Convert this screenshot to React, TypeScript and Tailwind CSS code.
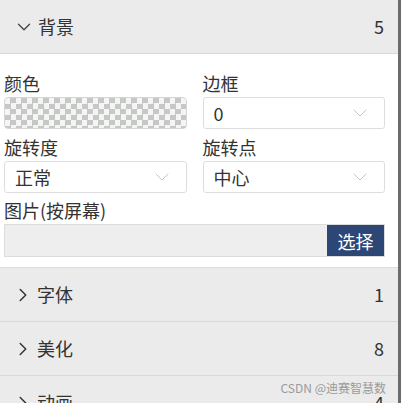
import { ChevronDown, ChevronRight } from 'lucide-react';

const closedSections = [
  { title: '字体', count: 1 },
  { title: '美化', count: 8 },
  { title: '动画', count: 4 },
];

const SelectBox = ({ value }: { value: string }) => (
  <div className="h-8 rounded-[3px] border border-[#dedede] bg-white flex items-center justify-between pl-[10px] pr-[12px]">
    <span className="text-[18px] text-[#333]">{value}</span>
    <ChevronDown className="w-[24px] h-[24px] text-[#c4c4c4]" strokeWidth={1} />
  </div>
);

const Label = ({ children }: { children: string }) => (
  <div className="h-7 flex items-center text-[18px] text-[#333] leading-none">{children}</div>
);

export default function App() {
  return (
    <div className="relative w-[401px] h-[403px] overflow-hidden bg-white font-['Noto_Sans_CJK_SC',sans-serif] flex">
      <div className="flex-1 flex flex-col">
        {/* open section */}
        <div className="h-[54px] shrink-0 bg-[#ebebeb] border-b border-[#d9d9d9] flex items-center pl-[13px] pr-[14px]">
          <ChevronDown className="w-[22px] h-[22px] text-[#444]" strokeWidth={1.4} />
          <span className="ml-[3px] text-[18px] text-[#333]">背景</span>
          <span className="ml-auto text-[18px] text-[#333]">5</span>
        </div>

        <div className="pt-[15px] pb-[10px] pl-1 pr-[13px] border-b border-[#dcdcdc]">
          <div className="grid grid-cols-2 gap-x-4">
            <div>
              <Label>颜色</Label>
              <div className="h-8 rounded-[4px] border border-[#d6d6d6] bg-[conic-gradient(#c6c8c6_25%,#f5f5f5_0_50%,#c6c8c6_0_75%,#f5f5f5_0)] bg-[length:11px_11px]" />
            </div>
            <div>
              <Label>边框</Label>
              <SelectBox value="0" />
            </div>
            <div className="mt-1">
              <Label>旋转度</Label>
              <SelectBox value="正常" />
            </div>
            <div className="mt-1">
              <Label>旋转点</Label>
              <SelectBox value="中心" />
            </div>
          </div>
          <div className="mt-[3px]">
            <Label>图片(按屏幕)</Label>
            <div className="h-[33px] flex border border-[#dcdcdc] bg-[#eeeeee]">
              <div className="flex-1" />
              <button className="w-[57px] bg-[#2c4676] text-white text-[18px] leading-none">选择</button>
            </div>
          </div>
        </div>

        {closedSections.map((s) => (
          <div
            key={s.title}
            className="h-[54px] shrink-0 bg-[#ebebeb] border-b border-[#d9d9d9] flex items-center pl-[12px] pr-[14px]"
          >
            <ChevronRight className="w-[22px] h-[22px] text-[#333]" strokeWidth={1.6} />
            <span className="ml-[3px] text-[18px] text-[#333]">{s.title}</span>
            <span className="ml-auto text-[18px] text-[#333]">{s.count}</span>
          </div>
        ))}
      </div>

      {/* right edge */}
      <div className="w-[3px] shrink-0 bg-[#6b6b6b]" />

      {/* watermark */}
      <div className="absolute right-[15px] top-[382px] text-[12px] leading-none text-[#9a9a9a]">
        CSDN @迪赛智慧数
      </div>
    </div>
  );
}
